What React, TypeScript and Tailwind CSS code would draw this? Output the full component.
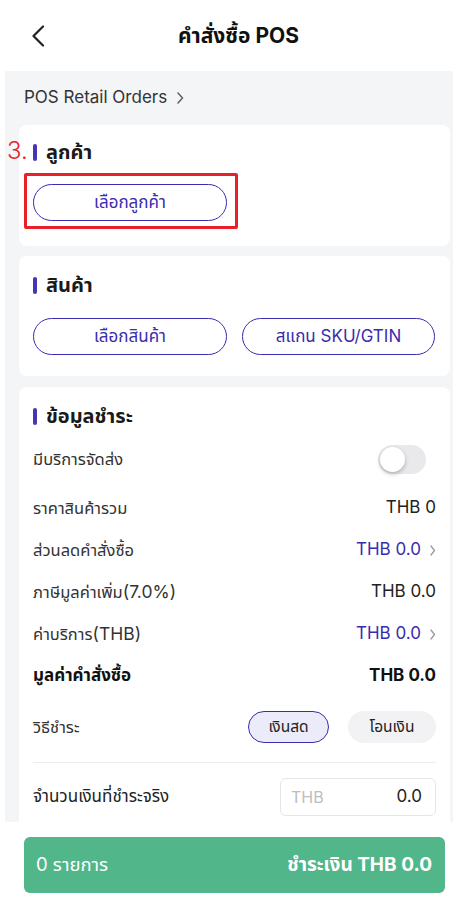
import React from "react";

const Chevron = ({ className = "", color = "#999", w = 7, h = 12, sw = 1.5 }: { className?: string; color?: string; w?: number; h?: number; sw?: number }) => (
  <svg width={w} height={h} viewBox={`0 0 ${w} ${h}`} className={className} fill="none">
    <polyline points={`1,1 ${w - 1.5},${h / 2} 1,${h - 1}`} stroke={color} strokeWidth={sw} strokeLinecap="round" strokeLinejoin="round" />
  </svg>
);

const SectionTitle = ({ children }: { children: React.ReactNode }) => (
  <div className="flex items-center h-[22px] gap-[9px]">
    <div className="w-[4px] h-[17px] rounded-full bg-[#4536b3]" />
    <div className="text-[20px] font-bold text-[#1a1a1a] leading-none">{children}</div>
  </div>
);

const PillButton = ({ children, className = "" }: { children: React.ReactNode; className?: string }) => (
  <div className={`h-[37px] rounded-full border border-[#3a2cae] flex items-center justify-center text-[17px] text-[#3a2cae] ${className}`}>
    {children}
  </div>
);

const Row = ({ label, value, link = false, bold = false }: { label: React.ReactNode; value: string; link?: boolean; bold?: boolean }) => (
  <div className="h-[42px] flex items-center justify-between">
    <div className={`${bold ? "text-[17px] font-bold text-[#111]" : "text-[16.5px] text-[#333]"}`}>{label}</div>
    <div className="flex items-center gap-[9px]">
      <div className={`text-[17px] ${link ? "text-[#3a2cae]" : bold ? "font-bold text-[#111]" : "text-[#222]"}`}>{value}</div>
      {link && <Chevron color="#9a9a9a" w={6} h={11} sw={1.3} />}
    </div>
  </div>
);

export default function App() {
  return (
    <div className="w-[453px] h-[907px] bg-white flex flex-col overflow-hidden font-['Inter','Noto_Sans_Thai','Noto_Sans','DejaVu_Sans',sans-serif]">
      {/* Header */}
      <div className="h-[71px] shrink-0 flex items-center">
        <div className="w-[60px] pl-[31px] flex items-center">
          <svg width="14" height="22" viewBox="0 0 14 22" fill="none">
            <polyline points="12,1.5 2.5,11 12,20.5" stroke="#222" strokeWidth="2.2" strokeLinecap="round" strokeLinejoin="round" />
          </svg>
        </div>
        <div className="flex-1 pr-[36px] text-center text-[21px] font-bold text-[#111]">คำสั่งซื้อ POS</div>
      </div>

      {/* Gray content */}
      <div className="h-[751px] shrink-0 ml-[5px] bg-[#f4f5f7] pl-[14px] pr-[3px] overflow-hidden flex flex-col">
        <div className="h-[54px] shrink-0 flex items-center gap-[10px] pl-[5px]">
          <span className="text-[17px] text-[#333]">POS Retail Orders</span>
          <Chevron color="#666" w={7} h={12} sw={1.6} />
        </div>

        {/* Customer card */}
        <div className="relative bg-white rounded-[8px] px-[14px] pt-[16px] pb-[17px] shrink-0">
          <div className="absolute left-[-12px] top-[14px] text-[24px] font-light text-[#e8202a] leading-none">3.</div>
          <SectionTitle>ลูกค้า</SectionTitle>
          <div className="mt-[10px] ml-[-9px] w-[214px] border-[3px] border-[#e8202a] rounded-[2px] pl-[6px] pr-[8px] pt-[8px] pb-[5px]">
            <PillButton className="w-[194px]">เลือกลูกค้า</PillButton>
          </div>
        </div>

        {/* Product card */}
        <div className="mt-[10px] bg-white rounded-[8px] px-[14px] pt-[18px] pb-[21px] shrink-0">
          <SectionTitle>สินค้า</SectionTitle>
          <div className="mt-[22px] flex gap-[15px]">
            <PillButton className="w-[194px]">เลือกสินค้า</PillButton>
            <PillButton className="w-[193px]">สแกน SKU/GTIN</PillButton>
          </div>
        </div>

        {/* Payment card */}
        <div className="mt-[11px] bg-white rounded-t-[8px] px-[14px] pt-[18px] flex-1">
          <SectionTitle>ข้อมูลชำระ</SectionTitle>
          <div className="mt-[11px] h-[42px] flex items-center justify-between">
            <div className="text-[16.5px] text-[#333]">มีบริการจัดส่ง</div>
            <div className="w-[48px] h-[29px] rounded-full bg-[#e9e9eb] p-[2px] flex items-center mr-[10px]">
              <div className="w-[25px] h-[25px] rounded-full bg-white shadow-[0_2px_4px_rgba(0,0,0,0.25)]" />
            </div>
          </div>
          <div className="mt-[7px]">
            <Row label="ราคาสินค้ารวม" value="THB 0" />
            <Row label="ส่วนลดคำสั่งซื้อ" value="THB 0.0" link />
            <Row label={<>ภาษีมูลค่าเพิ่ม<span className="text-[17.5px]">(7.0%)</span></>} value="THB 0.0" />
            <Row label={<>ค่าบริการ<span className="text-[17.5px]">(THB)</span></>} value="THB 0.0" link />
            <Row label="มูลค่าคำสั่งซื้อ" value="THB 0.0" bold />
          </div>
          <div className="mt-[6px] h-[48px] flex items-center justify-between">
            <div className="text-[16.5px] text-[#333]">วิธีชำระ</div>
            <div className="flex items-center gap-[19px]">
              <div className="w-[81px] h-[32px] rounded-full border border-[#3a2cae] bg-[#ecebfa] flex items-center justify-center text-[15.5px] text-[#222]">เงินสด</div>
              <div className="w-[88px] h-[32px] rounded-full bg-[#f2f2f4] flex items-center justify-center text-[15.5px] text-[#222]">โอนเงิน</div>
            </div>
          </div>
          <div className="mt-[11px] h-px bg-[#ededed]" />
          <div className="mt-[15px] h-[38px] flex items-center justify-between">
            <div className="text-[17px] text-[#222]">จำนวนเงินที่ชำระจริง</div>
            <div className="w-[156px] h-[38px] rounded-[6px] border border-[#e6e6e6] flex items-center justify-between pl-[10px] pr-[13px]">
              <span className="text-[16px] text-[#bdbdbd]">THB</span>
              <span className="text-[17px] text-[#222]">0.0</span>
            </div>
          </div>
        </div>
      </div>

      {/* Bottom bar */}
      <div className="flex-1 pt-[15px] pl-[24px] pr-[8px]">
        <div className="h-[56px] rounded-[6px] bg-[#52b68b] flex items-center justify-between pl-[12px] pr-[13px] text-white">
          <span className="text-[18.5px]">0 รายการ</span>
          <span className="text-[19px] font-bold">ชำระเงิน THB 0.0</span>
        </div>
      </div>
    </div>
  );
}
